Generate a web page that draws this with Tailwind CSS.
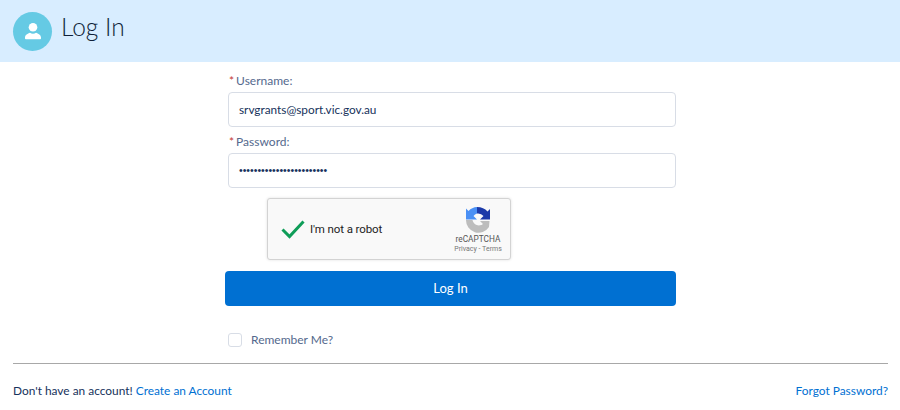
<!DOCTYPE html>
<html><head><meta charset="utf-8"><script src="https://cdn.jsdelivr.net/npm/@tailwindcss/browser@4"></script></head>
<body class="bg-white font-['Lato','Open_Sans',sans-serif] w-[900px] h-[410px] overflow-hidden">
<header class="h-[62px] bg-[#d8edff] flex items-center pl-[13px] gap-[9px]">
  <div class="w-[39px] h-[39px] rounded-full bg-[#65cae4] flex items-center justify-center">
    <svg width="24" height="24" viewBox="0 0 24 24" fill="#fff"><circle cx="12" cy="8.2" r="4.3"/><path d="M4 19.500v-1c0-2.600 2.800-4 5-4.800 1.800 1.300 4.200 1.300 6 0 2.200.8 5 2.200 5 4.800v1c0 .5-.4.800-.8.800H4.800c-.4 0-.8-.3-.8-.8z"/></svg>
  </div>
  <h1 class="text-[24.500px] leading-none font-light text-[#0e1f38] mb-[7px]">Log In</h1>
</header>
<main class="pl-[225px] w-[676px] box-content flex flex-col">
  <label class="mt-[9px] pl-[4px] h-[20px] flex items-center text-[12px] text-[#54698d]"><span class="text-[#c23934] mr-[2px]">*</span>Username:</label>
  <div class="mt-[1px] ml-[3px] h-[35px] w-[448px] border border-[#d8dde6] rounded-[4px] flex items-center px-[10px] pt-[1px] text-[11.800px] text-[#16325c]">srvgrants@sport.vic.gov.au</div>
  <label class="mt-[4px] pl-[4px] h-[22px] flex items-center text-[12px] text-[#54698d]"><span class="text-[#c23934] mr-[2px]">*</span>Password:</label>
  <div class="ml-[3px] h-[35px] w-[448px] border border-[#d8dde6] rounded-[4px] flex items-center px-[10px] text-[10.500px] text-[#16325c] font-['Liberation_Sans',sans-serif]">••••••••••••••••••••••••</div>
  <div class="mt-[10px] ml-[42px] w-[244px] h-[62px] bg-[#f9f9f9] border border-[#d3d3d3] rounded-[3px] shadow-[0_0_3px_rgba(0,0,0,0.12)] flex items-center font-['Roboto',sans-serif]">
    <svg class="ml-[13px]" width="24" height="19" viewBox="0 0 24 19" fill="none"><path d="M1.500 9.500 8.500 16.500 22.500 1.500" stroke="#0f9d58" stroke-width="3"/></svg>
    <span class="ml-[5px] pt-[2px] text-[11.500px] tracking-[-0.1px] text-[#222]">I'm not a robot</span>
    <div class="ml-auto mr-[9px] w-[46px] flex flex-col items-center mt-[1px]">
      <svg width="26" height="27" viewBox="0 0 26 27"><path d="M12 1A12.500 12.500 0 0 0 3.500 5L1 2.500V13.500h11L8.500 10A6.500 6.500 0 0 1 12 7.500z" fill="#4a90f5"/><path d="M12 1c4.500 0 8 1.500 10.500 4.500L25 3v10.500H15l3.500-3.500A7 7 0 0 0 12 7.500z" fill="#1c3aa9"/><path d="M1 14h6.500a6.500 6.500 0 0 0 10.500 4l-3-3h9.500L24 21A12.500 12.500 0 0 1 1 14z" fill="#bdbdbd"/></svg>
      <span class="text-[8.300px] leading-[10px] text-[#555] mt-[1px] whitespace-nowrap">reCAPTCHA</span>
      <span class="text-[7px] leading-[9px] text-[#777] mt-[1px] whitespace-nowrap">Privacy - Terms</span>
    </div>
  </div>
  <button class="mt-[11px] w-[451px] h-[35px] bg-[#0070d2] rounded-[4px] text-white text-[13px] text-center">Log In</button>
  <label class="mt-[26px] ml-[3px] h-[16px] flex items-center text-[12px] text-[#54698d]">
    <span class="w-[14px] h-[14px] border border-[#d8dde6] rounded-[3px] mr-[9px]"></span>Remember Me?</label>
</main>
<hr class="mt-[15px] mx-[13px] w-[875px] border-0 h-[1px] bg-[#a8a8a8]">
<footer class="mx-[13px] w-[875px] mt-[18px] flex justify-between text-[11.900px] text-[#16325c] leading-[18px]">
  <p>Don't have an account! <a class="text-[#0070d2]">Create an Account</a></p>
  <a class="text-[#0070d2]">Forgot Password?</a>
</footer>
</body></html>
